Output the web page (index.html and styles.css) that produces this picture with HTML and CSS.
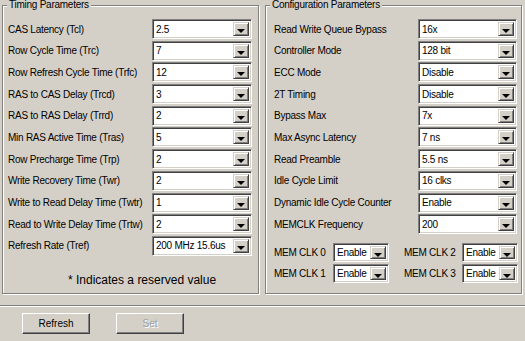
FILE: index.html
```html
<!DOCTYPE html>
<html lang="en">
    <head>
        <meta charset="utf-8">
        <title>Memory Timing</title>
        <link rel="stylesheet" href="styles.css">
    </head>
    <body>
        <div class="window"> <!-- whole dialog -->
            <div class="groups">
                <div class="group group-timing">
                    <span class="legend">Timing Parameters</span>
                    <div class="rows">
                        <div class="row"><span class="label">CAS Latency (Tcl)</span><div class="combo"><span class="value">2.5</span><span class="drop"></span></div></div>
                        <div class="row"><span class="label">Row Cycle Time (Trc)</span><div class="combo"><span class="value">7</span><span class="drop"></span></div></div>
                        <div class="row"><span class="label">Row Refresh Cycle Time (Trfc)</span><div class="combo"><span class="value">12</span><span class="drop"></span></div></div>
                        <div class="row"><span class="label">RAS to CAS Delay (Trcd)</span><div class="combo"><span class="value">3</span><span class="drop"></span></div></div>
                        <div class="row"><span class="label">RAS to RAS Delay (Trrd)</span><div class="combo"><span class="value">2</span><span class="drop"></span></div></div>
                        <div class="row"><span class="label">Min RAS Active Time (Tras)</span><div class="combo"><span class="value">5</span><span class="drop"></span></div></div>
                        <div class="row"><span class="label">Row Precharge Time (Trp)</span><div class="combo"><span class="value">2</span><span class="drop"></span></div></div>
                        <div class="row"><span class="label">Write Recovery Time (Twr)</span><div class="combo"><span class="value">2</span><span class="drop"></span></div></div>
                        <div class="row"><span class="label">Write to Read Delay Time (Twtr)</span><div class="combo"><span class="value">1</span><span class="drop"></span></div></div>
                        <div class="row"><span class="label">Read to Write Delay Time (Trtw)</span><div class="combo"><span class="value">2</span><span class="drop"></span></div></div>
                        <div class="row"><span class="label">Refresh Rate (Tref)</span><div class="combo"><span class="value">200 MHz 15.6us</span><span class="drop"></span></div></div>
                    </div>
                    <p class="note">* Indicates a reserved value</p>
                </div>
                <div class="group group-config">
                    <span class="legend">Configuration Parameters</span>
                    <div class="rows">
                        <div class="row"><span class="label">Read Write Queue Bypass</span><div class="combo"><span class="value">16x</span><span class="drop"></span></div></div>
                        <div class="row"><span class="label">Controller Mode</span><div class="combo"><span class="value">128 bit</span><span class="drop"></span></div></div>
                        <div class="row"><span class="label">ECC Mode</span><div class="combo"><span class="value">Disable</span><span class="drop"></span></div></div>
                        <div class="row"><span class="label">2T Timing</span><div class="combo"><span class="value">Disable</span><span class="drop"></span></div></div>
                        <div class="row"><span class="label">Bypass Max</span><div class="combo"><span class="value">7x</span><span class="drop"></span></div></div>
                        <div class="row"><span class="label">Max Async Latency</span><div class="combo"><span class="value">7 ns</span><span class="drop"></span></div></div>
                        <div class="row"><span class="label">Read Preamble</span><div class="combo"><span class="value">5.5 ns</span><span class="drop"></span></div></div>
                        <div class="row"><span class="label">Idle Cycle Limit</span><div class="combo"><span class="value">16 clks</span><span class="drop"></span></div></div>
                        <div class="row"><span class="label">Dynamic Idle Cycle Counter</span><div class="combo"><span class="value">Enable</span><span class="drop"></span></div></div>
                        <div class="row"><span class="label">MEMCLK Frequency</span><div class="combo"><span class="value">200</span><span class="drop"></span></div></div>
                    </div>
                    <div class="clocks"> <!-- 2 x 2 grid of clock enables -->
                        <div class="clk"><span class="label">MEM CLK 0</span><div class="combo small"><span class="value">Enable</span><span class="drop"></span></div></div>
                        <div class="clk"><span class="label">MEM CLK 2</span><div class="combo small"><span class="value">Enable</span><span class="drop"></span></div></div>
                        <div class="clk"><span class="label">MEM CLK 1</span><div class="combo small"><span class="value">Enable</span><span class="drop"></span></div></div>
                        <div class="clk"><span class="label">MEM CLK 3</span><div class="combo small"><span class="value">Enable</span><span class="drop"></span></div></div>
                    </div>
                </div>
            </div>
            <div class="footer">
                <button type="button" class="btn">Refresh</button>
                <button type="button" class="btn" disabled>Set</button>
            </div>
        </div>
    </body>
</html>
```

FILE: styles.css
```css
*{
    margin: 0;
    padding: 0;
    box-sizing: border-box;
}
body{
    background-color: #d4d0c8; /* classic windows face colour. */
    font-family: "Liberation Sans", Arial, sans-serif;
    font-size: 10px;
    letter-spacing: -0.25px;
    color: #000;
}
.window{
    width: 525px;
    height: 341px;
    display: flex;
    flex-direction: column;
}
.groups{
    display: flex;
    gap: 6px;
    padding: 5px 0 0 2px;
}
.group{ /* etched group box. */
    position: relative;
    width: 257px;
    height: 289px;
    border: 1px solid #808080;
    box-shadow: inset 1px 1px 0 #fff, 1px 1px 0 #fff;
    padding-top: 13px;
}
.legend{
    position: absolute;
    top: -7px;
    left: 4px;
    padding: 0 2px;
    background-color: #d4d0c8;
    line-height: 12px;
}
.group-timing{
    padding-left: 5px;
    padding-right: 6px;
}
.group-config{
    padding-left: 8px;
    padding-right: 4px;
}
.rows{
    display: flex;
    flex-direction: column;
    gap: 1.7px;
}
.row{
    height: 20px;
    display: flex;
    align-items: center;
    justify-content: space-between;
}
.combo{ /* sunken drop down list. */
    width: 100px;
    height: 20px;
    display: flex;
    align-items: center;
    background-color: #fff;
    border: 1px solid;
    border-color: #808080 #fff #fff #808080;
    box-shadow: inset 1px 1px 0 #404040, inset -1px -1px 0 #d4d0c8;
    padding: 2px;
}
.group-config .combo{
    width: 99px;
}
.combo.small{
    width: 56px;
    height: 19px;
}
.value{
    flex: 1;
    padding-left: 1px;
    white-space: nowrap;
    overflow: hidden;
}
.drop{
    position: relative;
    width: 16px;
    height: 100%;
    background-color: #d4d0c8;
    border: 1px solid;
    border-color: #d4d0c8 #404040 #404040 #d4d0c8;
    box-shadow: inset 1px 1px 0 #fff, inset -1px -1px 0 #808080;
}
.drop::after{ /* the little black arrow. */
    content: "";
    position: absolute;
    left: 3px;
    top: 6px;
    border-left: 4px solid transparent;
    border-right: 4px solid transparent;
    border-top: 4px solid #000;
}
.note{
    margin-top: 17px;
    padding-left: 60px;
    font-size: 12px;
    letter-spacing: 0;
    line-height: 14px;
}
.clocks{
    margin-top: 9px;
    display: grid;
    grid-template-columns: 130px 114px;
    row-gap: 2px;
}
.clk{
    display: flex;
    align-items: center;
    justify-content: space-between;
    padding-right: 15px;
}
.clk:nth-child(even){
    padding-right: 0;
}
.footer{
    margin-top: 11px;
    border-top: 1px solid #808080;
    box-shadow: inset 0 1px 0 #fff;
    padding: 7px 0 0 22px;
    display: flex;
    gap: 26px;
}
.btn{
    width: 68px;
    height: 21px;
    font: inherit;
    font-size: 10px;
    background-color: #d4d0c8;
    border: 1px solid;
    border-color: #fff #404040 #404040 #fff;
    box-shadow: inset -1px -1px 0 #808080;
    color: #000;
}
.btn:disabled{
    color: #a0a0a0;
    text-shadow: 1px 1px 0 #fff;
}
```
